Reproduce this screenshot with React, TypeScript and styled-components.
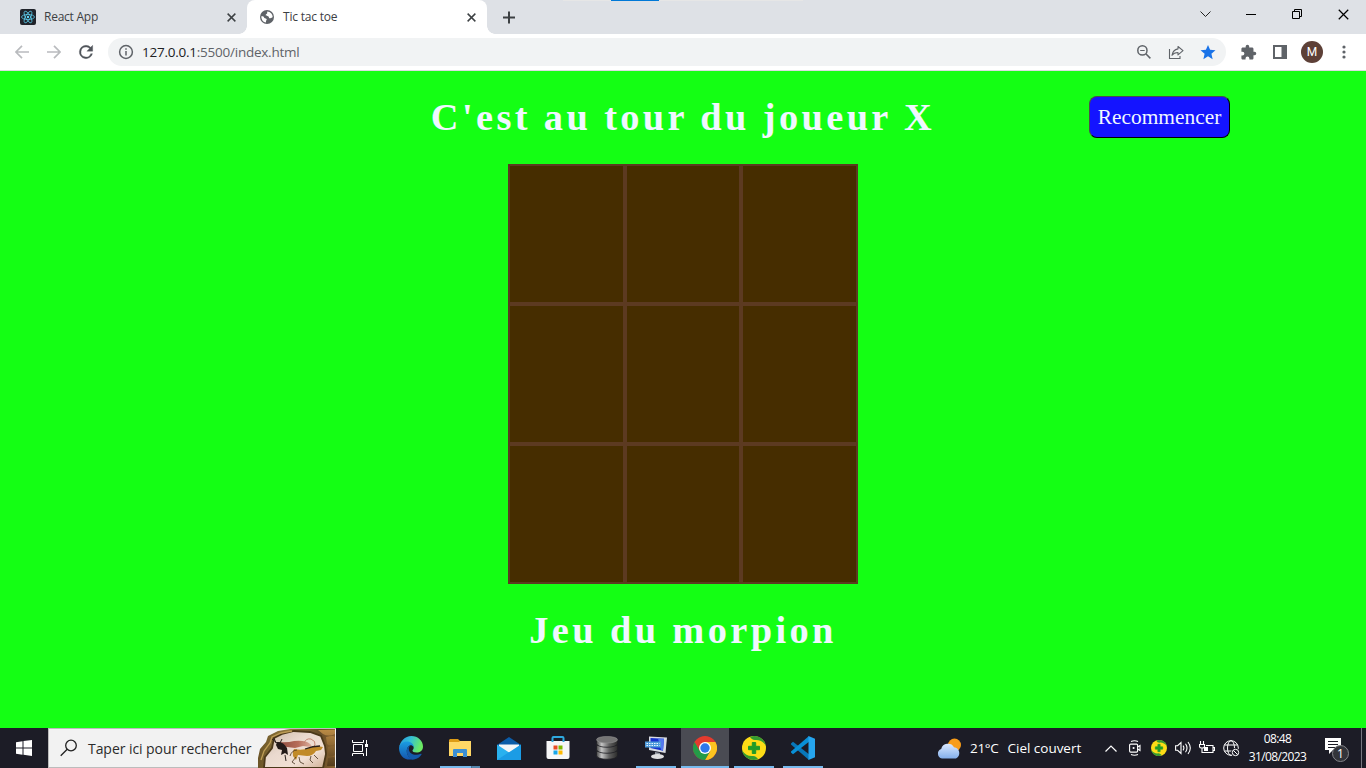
import React from 'react';
import styled, { createGlobalStyle, css } from 'styled-components';

const GlobalStyle = createGlobalStyle`
  * { box-sizing: border-box; }
  html, body { margin: 0; padding: 0; }
  body { width: 1366px; height: 768px; overflow: hidden; }
  svg { display: block; flex: none; }
`;

const uiFont = css`font-family: "Open Sans", "Noto Sans", sans-serif;`;

const Screen = styled.div`
  display: flex;
  flex-direction: column;
  width: 1366px;
  height: 768px;
  ${uiFont}
`;

/* ---------- browser chrome ---------- */

const TabStrip = styled.header`
  position: relative;
  display: flex;
  height: 34px;
  flex: none;
  background: #dee1e6;
`;

const TopHint = styled.div`
  position: absolute;
  top: 0;
  left: 563px;
  width: 240px;
  height: 1px;
  background: linear-gradient(90deg, #e6e6e6 48px, #0078d7 48px, #0078d7 96px, #e6e6e6 96px);
`;

const Tab = styled.div<{ $active?: boolean }>`
  position: relative;
  display: flex;
  align-items: center;
  width: ${p => (p.$active ? 240 : 247)}px;
  height: 34px;
  padding: 0 11px 0 ${p => (p.$active ? 12 : 20)}px;
  color: #3c4043;
  ${p => p.$active && css`
    background: #fff;
    border-radius: 8px 8px 0 0;
    &::before, &::after {
      content: '';
      position: absolute;
      bottom: 0;
      width: 8px;
      height: 8px;
    }
    &::before { left: -8px; background: radial-gradient(circle at 0 0, transparent 7.5px, #fff 8px); }
    &::after { right: -8px; background: radial-gradient(circle at 100% 0, transparent 7.5px, #fff 8px); }
  `}
`;

const TabTitle = styled.span<{ $spacing: number }>`
  flex: 1;
  margin-left: 8px;
  font-size: 12px;
  line-height: 16px;
  letter-spacing: ${p => p.$spacing}px;
  white-space: nowrap;
`;

const NewTab = styled.div`
  display: flex;
  align-items: center;
  margin-left: 16px;
`;

const WindowControls = styled.div`
  display: flex;
  margin-left: auto;
  height: 28px;
`;

const WindowButton = styled.div`
  display: flex;
  width: 46px;
  align-items: center;
  justify-content: center;
`;

const Toolbar = styled.div`
  display: flex;
  align-items: center;
  height: 37px;
  flex: none;
  padding: 0 6px;
  background: #fff;
  border-bottom: 1px solid #dadce0;
`;

const ToolSlot = styled.div`
  display: flex;
  width: 32px;
  height: 28px;
  align-items: center;
  justify-content: center;
`;

const AddressBar = styled.div`
  display: flex;
  align-items: center;
  width: 1118px;
  height: 28px;
  margin: 0 6px 0 6px;
  padding: 0 2px 0 10px;
  border-radius: 14px;
  background: #f1f3f4;
`;

const Url = styled.div`
  flex: 1;
  margin-left: 8px;
  font-size: 13.5px;
  line-height: 18px;
  letter-spacing: -0.24px;
  color: #5f6368;
  b { font-weight: 400; color: #202124; }
`;

const Avatar = styled.div`
  width: 22px;
  height: 22px;
  border-radius: 50%;
  background: #5d4037;
  color: #fff;
  font: 12px/22px Roboto, sans-serif;
  text-align: center;
`;

/* ---------- game page ---------- */

const Page = styled.main`
  display: grid;
  grid-template-columns: 1fr 560px 1fr;
  grid-template-rows: 93px 420px 1fr;
  justify-items: center;
  flex: 1;
  background: #14ff14;
  font-family: "Liberation Serif", serif;
`;

const Heading = styled.h1<{ $row: number }>`
  grid-column: 2;
  grid-row: ${p => p.$row};
  margin: 24px 0 0;
  font-size: 38.4px;
  line-height: 45px;
  font-weight: 700;
  letter-spacing: 3.38px;
  color: #f0f8ff;
  white-space: nowrap;
`;

const Restart = styled.button`
  grid-column: 3;
  grid-row: 1;
  justify-self: end;
  width: 141px;
  height: 42px;
  margin: 25px 136px 0 0;
  padding: 0;
  border: 1px solid;
  border-color: #4c4c4c #000 #000 #4c4c4c;
  border-radius: 8px;
  background: #1414ff;
  color: #f0f8ff;
  font: 21.4px/24px "Liberation Serif", serif;
`;

const Board = styled.div`
  grid-column: 2;
  grid-row: 2;
  display: grid;
  grid-template: repeat(3, 1fr) / repeat(3, 1fr);
  width: 350px;
  height: 420px;
`;

const Cell = styled.div`
  border: 2px solid #5c3a21;
  background: #462d00;
`;

/* ---------- taskbar ---------- */

const Taskbar = styled.footer`
  display: flex;
  height: 40px;
  flex: none;
  background: #1c1c26;
  color: #fff;
`;

const TaskSlot = styled.div<{ $active?: boolean; $gap?: number }>`
  position: relative;
  display: flex;
  width: 48px;
  height: 40px;
  margin-left: ${p => p.$gap ?? 0}px;
  align-items: center;
  justify-content: center;
  background: ${p => (p.$active ? '#4a4b53' : 'transparent')};
`;

const Running = styled.i<{ $wide?: boolean; $stack?: boolean }>`
  position: absolute;
  bottom: 0;
  left: ${p => (p.$wide ? 0 : 4)}px;
  width: ${p => (p.$wide ? 48 : 40)}px;
  height: 2px;
  background: ${p => (p.$stack ? 'linear-gradient(90deg, #76b9ed 31px, #3b5872 31px, #5486ad 32px)' : '#76b9ed')};
`;

const SearchBox = styled.div`
  display: flex;
  align-items: center;
  width: 288px;
  height: 40px;
  padding-left: 11px;
  background: #f2f2f2;
  border: 1px solid #bcbcbc;
  border-right: 0;
`;

const SearchText = styled.span`
  width: 170px;
  margin-left: 10px;
  padding-top: 1px;
  font-size: 14px;
  line-height: 20px;
  letter-spacing: -0.06px;
  color: #2b2b2b;
  white-space: nowrap;
`;

const Weather = styled.div`
  display: flex;
  align-items: center;
  margin-left: auto;
  width: 162px;
  font-size: 13.5px;
  white-space: nowrap;
`;

const Temperature = styled.span`
  margin-left: 8px;
  letter-spacing: -0.3px;
`;

const Conditions = styled.span`
  margin-left: 9px;
  letter-spacing: -0.02px;
`;

const Tray = styled.div`
  display: flex;
  align-items: center;
  width: 144px;
`;

const TraySlot = styled.div`
  display: flex;
  width: 24px;
  justify-content: center;
`;

const Clock = styled.div`
  display: flex;
  flex-direction: column;
  width: 73px;
  padding: 2px 4px 0 0;
  text-align: center;
  font-size: 12px;
  line-height: 18px;
  letter-spacing: -0.6px;
`;

const Notifications = styled.div`
  display: flex;
  width: 46px;
  padding: 4px 4px 0 0;
  align-items: center;
  justify-content: center;
  border-right: 1px solid #77777f;
  margin-right: 4px;
`;

/* ---------- icons ---------- */

const CloseIcon = ({ size = 9, width = 1.6, color = '#3c4043' }: { size?: number; width?: number; color?: string }) => (
  <svg width={size} height={size} viewBox="0 0 10 10" stroke={color} strokeWidth={width}>
    <path d="M.7.7l8.6 8.6M9.3.7L.7 9.3" />
  </svg>
);

const ReactIcon = () => (
  <svg width="16" height="16" viewBox="0 0 16 16" fill="none" stroke="#61dafb" strokeWidth=".7">
    <rect width="16" height="16" rx="2" fill="#20232a" stroke="none" />
    {[0, 60, 120].map(a => <ellipse key={a} cx="8" cy="8" rx="6.5" ry="2.5" transform={`rotate(${a} 8 8)`} />)}
    <circle cx="8" cy="8" r="1.2" fill="#61dafb" stroke="none" />
  </svg>
);

const GlobeIcon = () => (
  <svg width="16" height="16" viewBox="0 0 16 16">
    <circle cx="8" cy="8" r="7" fill="#5f6368" />
    <path d="M8.4 2.4C7.5 3.2 9 3.8 7.8 4.8S6.5 5.7 6.9 6.5s2.3.2 2.8 1.3.1 1.5 1.5 1.5 1.7-.6 2.5-1.2A5.8 5.8 0 0 0 8.4 2.4zM2.3 7.3A5.7 5.7 0 0 0 7 13.6V12.2c0-.7.7-.8.7-1.6S7 9.4 6 9.2 5.1 7.7 4.4 7.4s-1.4-.1-2.1-.1z" fill="#fff" />
  </svg>
);

const Arrow = ({ flip }: { flip?: boolean }) => (
  <svg width="14" height="14" viewBox="0 0 14 14" fill="none" stroke="#b9bbbe" strokeWidth="1.7" transform={flip ? 'scale(-1 1)' : undefined}>
    <path d="M14 7H1.4M7 .8L.9 7 7 13.2" />
  </svg>
);

const ReloadIcon = () => (
  <svg width="20" height="20" viewBox="0 0 24 24" fill="#50545a" stroke="#50545a" strokeWidth=".4">
    <path d="M17.65 6.35A7.95 7.95 0 0 0 12 4a8 8 0 1 0 7.73 10h-2.08A6 6 0 1 1 12 6c1.66 0 3.14.69 4.22 1.78L13 11h7V4z" />
  </svg>
);

const InfoIcon = () => (
  <svg width="16" height="16" viewBox="0 0 16 16" fill="none" stroke="#5f6368" strokeWidth="1.5">
    <circle cx="8" cy="8" r="6.4" /><path d="M8 7v4.5M8 4.2v1.6" />
  </svg>
);

const ZoomIcon = () => (
  <svg width="16" height="16" viewBox="0 0 16 16" fill="none" stroke="#5f6368" strokeWidth="1.5">
    <circle cx="6.4" cy="6.4" r="4.6" /><path d="M9.8 9.8l4.6 4.6" /><path d="M4.2 6.5h4.5" strokeWidth="1" />
  </svg>
);

const ShareIcon = () => (
  <svg width="16" height="16" viewBox="0 0 16 16" fill="none" stroke="#5f6368" strokeWidth="1.1">
    <path d="M1.5 5v9.5h10.5v-2.5" />
    <path d="M10 2.5l5 4.2-5 4.2V8.5c-2.7 0-4.6.7-6 2.8.5-3.4 2.4-5.8 6-6.4z" strokeLinejoin="round" />
  </svg>
);

const StarIcon = () => (
  <svg width="18" height="18" viewBox="0 0 24 24" fill="#1a73e8">
    <path d="M12 17.8L18.2 21.5l-1.64-7.03L22 9.74l-7.19-.61L12 2.5 9.19 9.13 2 9.74l5.46 4.73L5.82 21.5z" />
  </svg>
);

const PuzzleIcon = () => (
  <svg width="17" height="17" viewBox="0 0 24 24" fill="#5f6368">
    <path d="M20.5 11H19V7c0-1.1-.9-2-2-2h-4V3.5a2.5 2.5 0 0 0-5 0V5H4c-1.1 0-2 .9-2 2v3.8h1.5a2.7 2.7 0 0 1 0 5.4H2V20c0 1.1.9 2 2 2h3.8v-1.5a2.7 2.7 0 0 1 5.4 0V22H17c1.1 0 2-.9 2-2v-4h1.5a2.5 2.5 0 0 0 0-5z" />
  </svg>
);

const PanelIcon = () => (
  <svg width="14" height="14" viewBox="0 0 14 14">
    <path d="M0 0h14v14H0zM2 2v10h6.5V2z" fill="#5f6368" fillRule="evenodd" />
  </svg>
);

const DotsIcon = () => (
  <svg width="4" height="14" viewBox="0 0 4 14" fill="#5f6368">
    <circle cx="2" cy="2" r="1.6" /><circle cx="2" cy="7" r="1.6" /><circle cx="2" cy="12" r="1.6" />
  </svg>
);

const CavePainting = () => (
  <svg width="77" height="39" viewBox="0 0 77 39">
    <defs>
      <linearGradient id="rock" x1="0" y1="0" x2="1" y2="1">
        <stop offset="0" stopColor="#c9b7a2" /><stop offset=".4" stopColor="#ead9ce" /><stop offset=".7" stopColor="#f1e0d4" /><stop offset="1" stopColor="#cfae94" />
      </linearGradient>
      <linearGradient id="edge" x1="0" y1="0" x2="1" y2="0">
        <stop offset="0" stopColor="#6b5427" /><stop offset=".4" stopColor="#937a3d" /><stop offset=".8" stopColor="#654d28" /><stop offset="1" stopColor="#8a6330" />
      </linearGradient>
      <linearGradient id="sand" x1="0" y1="0" x2="0" y2="1">
        <stop offset="0" stopColor="#b98a45" /><stop offset="1" stopColor="#543c1c" />
      </linearGradient>
      <linearGradient id="ochre" x1="0" y1="0" x2="1" y2="0">
        <stop offset="0" stopColor="#7d3325" /><stop offset=".6" stopColor="#ad5a44" /><stop offset="1" stopColor="#d8a795" />
      </linearGradient>
    </defs>
    <path d="M0 39V29L2 20 8 13 10 7 20 2 32 0H77v39z" fill="url(#edge)" />
    <path d="M60 1h17v4q-7 3-12 0zM68 8q8-2 9 0v7q-5 3-8 0zM70 18q7-2 7 0v8q-5 3-7 0zM70 29q7-2 7 0v8h-8z" fill="url(#sand)" />
    <path d="M6 39l1-11 7-9 2-10 8-4 12-3 16 1 11 4 4 10 1 8-3 14z" fill="url(#rock)" stroke="#4b3819" strokeWidth="1.8" />
    <path d="M3 31l3-9 6-8 2-6 9-4 11-2" fill="none" stroke="#bd9c55" strokeWidth="1.3" />
    <path d="M21 13q8 1 15-1 7-1 13 1 6 3 4 5l-8-1-8 2-8-1-9-1z" fill="url(#ochre)" opacity=".85" />
    <path d="M46 14q2-5 7-4 5 2 4 6l-3 3" fill="none" stroke="#c17f69" strokeWidth=".9" />
    <path d="M19 13q6-1 10 6l1 7-3-2-4 2 1-5-4-1-2-4z" fill="#221a18" />
    <path d="M19 14l-5-4M18 14l-2-5M22 14l2-4M27 26l1 6" fill="none" stroke="#2b211d" strokeWidth="1" />
    <path d="M36 20q8 2 15-1l8-2 6 1-2 3-5 1q-3 5-9 5l-9-1-2 5-3-4q-1-4 1-7z" fill="#c18a28" />
    <path d="M47 20q8-3 15-3" fill="none" stroke="#2c211a" strokeWidth="1.3" />
    <path d="M39 21q-5 0-7 6M38 28l-4 5 3 2M41 28l1 5 4 2M53 27l-1 4 3 3M56 26l4 4" fill="none" stroke="#46321f" strokeWidth=".8" />
  </svg>
);

const EdgeIcon = () => (
  <svg width="24" height="24" viewBox="0 0 24 24">
    <defs>
      <linearGradient id="edgeTop" x1="0" y1="0" x2="1" y2=".3"><stop stopColor="#2697df" /><stop offset=".5" stopColor="#35bfd5" /><stop offset="1" stopColor="#6bea63" /></linearGradient>
      <linearGradient id="edgeLow" x1="0" y1="0" x2="0" y2="1"><stop stopColor="#1b9de2" /><stop offset="1" stopColor="#1555ad" /></linearGradient>
    </defs>
    <path d="M0 12C1 5 6 0 12.4 0 19 0 24 5 24 10.5c0 4-3 6-6.5 6-3 0-4-1-4-2 0-.8 1.2-1 1.2-3C14.7 9 11 6.8 7.8 6.8 3.5 6.8 1 9 0 12z" fill="url(#edgeTop)" />
    <path d="M0 12c.5-4 4-6.5 8-6.5 4.5 0 7 3 6.7 6-.4-1.7-2-2.3-3.3-2.3-2 .3-3.6 3-3.6 6 0 4.5 3.2 7.7 8 7.5C6.5 26 0 20 0 12z" fill="url(#edgeLow)" />
    <path d="M11.4 9.2c-2 .3-3.6 3-3.6 6 0 4.5 3.2 8.5 7.2 8.3 3.5-.5 6-2.5 7.5-5 .3-.7-.1-1-.7-.7-5 2.4-12 .6-12-5 0-1.6.8-2.9 1.6-3.6z" fill="#135aaa" />
  </svg>
);

const FolderIcon = () => (
  <svg width="22" height="18" viewBox="0 0 22 18">
    <path d="M1 0h8l2 2h11v4H0V1z" fill="#dd9c16" /><path d="M0 3h10l1-1h11v15H0z" fill="#ffd766" />
    <path d="M4 18v-7q0-1 1-1h12q1 0 1 1v7h-4v-4H8v4z" fill="#3c8fd3" />
  </svg>
);

const MailIcon = () => (
  <svg width="24" height="23" viewBox="0 0 24 23">
    <path d="M0 8L12 0l12 8v5H0z" fill="#0b5ca8" /><path d="M2 7.5h20v3L12 16 2 10.5z" fill="#f4f6f8" />
    <path d="M0 7.5l12 8 12-8V23H0z" fill="#29b1ef" /><path d="M0 23L24 7.5V23z" fill="#1490df" opacity=".65" />
  </svg>
);

const StoreIcon = () => (
  <svg width="24" height="24" viewBox="0 0 24 24">
    <path d="M.5 5h23v16q0 2-2 2h-19q-2 0-2-2z" fill="#f6f6f7" />
    <path d="M6.5 6V2q0-1 1-1h9q1 0 1 1v4" fill="none" stroke="#2ea9df" strokeWidth="2" />
    <path d="M7.5 9.5h4v4h-4z" fill="#e94c25" /><path d="M12.5 9.5h4v4h-4z" fill="#7fba00" />
    <path d="M7.5 14.5h4v4h-4z" fill="#16a5e9" /><path d="M12.5 14.5h4v4h-4z" fill="#ffb900" />
  </svg>
);

const DatabaseIcon = () => (
  <svg width="22" height="24" viewBox="0 0 22 24">
    <defs><linearGradient id="metal"><stop stopColor="#444" /><stop offset=".25" stopColor="#c5c5c5" /><stop offset=".6" stopColor="#606060" /><stop offset="1" stopColor="#2b2b2b" /></linearGradient></defs>
    {[15.5, 9.5, 3.5].map(y => <path key={y} d={`M.5 ${y}v4c0 5 21 5 21 0v-4z`} fill="url(#metal)" stroke="#1f1f25" strokeWidth=".8" />)}
    <ellipse cx="11" cy="3.7" rx="10.5" ry="3.3" fill="#757575" stroke="#929292" strokeWidth=".6" />
  </svg>
);

const ComputerIcon = () => (
  <svg width="24" height="24" viewBox="0 0 24 24">
    <path d="M5 .5l18 1-1.5 15.5L5 14z" fill="#d9dce3" /><path d="M6.5 2l13.5.8-1 12L6.5 12z" fill="#1530ce" />
    <path d="M14 2.5l6 .3-1 12-2-1z" fill="#5278ee" /><path d="M11 16l5 1v3h-5z" fill="#949aa3" />
    <ellipse cx="13.5" cy="20.5" rx="6.5" ry="2.6" fill="#dedfe1" />
    <path d="M1 5.5h16v6H1z" fill="#4f9bdb" /><path d="M2.5 7.5h13M2.5 9.5h13" stroke="#e7f4ff" strokeDasharray="1.5 1" />
  </svg>
);

const ChromeIcon = () => (
  <svg width="24" height="24" viewBox="0 0 24 24">
    <circle cx="12" cy="12" r="12" fill="#e33b2e" />
    <path d="M12 6h10.4A12 12 0 0 1 12 24l5.2-9z" fill="#fdc41f" />
    <path d="M1.600 6A12 12 0 0 0 12 24l5.200-9H6.800z" fill="#249b48" />
    <circle cx="12" cy="12" r="6" fill="#fff" /><circle cx="12" cy="12" r="4.7" fill="#2f78eb" />
  </svg>
);

const PlusBadge = ({ size = 24 }: { size?: number }) => (
  <svg width={size} height={size} viewBox="0 0 24 24">
    <circle cx="12" cy="12" r="12" fill="#fddc16" />
    <path d="M8 1C15-2 23 3 23.8 9.5 21 5 17 3.5 13 4 10.5 4 9 2.5 8 1zM16 23C9 26 1 21 .2 14.5 3 19 7 20.5 11 20c2.5 0 4 1.5 5 3z" fill="#359b30" />
    <path d="M10.3 6.5h3.4v3.8h3.8v3.4h-3.8v3.8h-3.4v-3.8H6.5v-3.4h3.8z" fill="#219b28" stroke="#219b28" strokeWidth="1" strokeLinejoin="round" />
  </svg>
);

const CodeIcon = () => (
  <svg width="24" height="24" viewBox="0 0 24 24">
    <path d="M0 7.5l2-1.7 16 12.5V24L0 8.5z" fill="#0877b9" />
    <path d="M0 16.5l2 1.7L18 5.7V0L0 15.5z" fill="#0990d6" />
    <path d="M17.5 0L24 2.7v18.6L17.5 24z" fill="#26a5ee" />
  </svg>
);

const WeatherIcon = () => (
  <svg width="25" height="21" viewBox="0 0 25 21">
    <defs><linearGradient id="cloud" x1="0" y1="0" x2="0" y2="1"><stop stopColor="#dceaff" /><stop offset="1" stopColor="#83aeea" /></linearGradient></defs>
    <circle cx="17.5" cy="7" r="6.5" fill="#f89c18" />
    <path d="M5 20.5a5 5 0 0 1-.8-9.6A7 7 0 0 1 17 9.2 6 6 0 0 1 19 20.5z" fill="url(#cloud)" />
  </svg>
);

const NotificationIcon = () => (
  <svg width="26" height="26" viewBox="0 0 26 26">
    <path d="M1 1h16v12H9l-4 4v-4H1z" fill="#fff" /><path d="M4 4.5h10M4 7.5h10M4 10.5h7" stroke="#1c1c26" />
    <circle cx="16.5" cy="16.5" r="8" fill="#33343a" stroke="#85858a" />
    <text x="16.5" y="21" textAnchor="middle" fill="#fff" fontFamily="Open Sans" fontSize="12">1</text>
  </svg>
);

export default function App() {
  return (
    <Screen>
      <GlobalStyle />
      <TabStrip>
        <TopHint />
        <Tab><ReactIcon /><TabTitle $spacing={-0.25}>React App</TabTitle><CloseIcon /></Tab>
        <Tab $active><GlobeIcon /><TabTitle $spacing={-0.2}>Tic tac toe</TabTitle><CloseIcon /></Tab>
        <NewTab>
          <svg width="13" height="13" viewBox="0 0 13 13" stroke="#3c4043" strokeWidth="2"><path d="M6 .5v12M0 6.5h12" /></svg>
        </NewTab>
        <WindowControls>
          <WindowButton><svg width="11" height="7" viewBox="0 0 11 7" fill="none" stroke="#222"><path d="M.5.5l5 5 5-5" /></svg></WindowButton>
          <WindowButton><svg width="10" height="10" viewBox="0 0 10 10" stroke="#000"><path d="M0 5.5h10" /></svg></WindowButton>
          <WindowButton><svg width="10" height="10" viewBox="0 0 10 10" fill="none" stroke="#000"><path d="M.5 2.5h7v7h-7zM2.5 2.5v-2h7v7h-2" /></svg></WindowButton>
          <WindowButton><CloseIcon size={11} width={1.1} color="#000" /></WindowButton>
        </WindowControls>
      </TabStrip>
      <Toolbar>
        <ToolSlot><Arrow /></ToolSlot>
        <ToolSlot><Arrow flip /></ToolSlot>
        <ToolSlot><ReloadIcon /></ToolSlot>
        <AddressBar>
          <InfoIcon />
          <Url><b>127.0.0.1</b>:5500/index.html</Url>
          <ToolSlot><ZoomIcon /></ToolSlot>
          <ToolSlot><ShareIcon /></ToolSlot>
          <ToolSlot><StarIcon /></ToolSlot>
        </AddressBar>
        <ToolSlot><PuzzleIcon /></ToolSlot>
        <ToolSlot><PanelIcon /></ToolSlot>
        <ToolSlot><Avatar>M</Avatar></ToolSlot>
        <ToolSlot><DotsIcon /></ToolSlot>
      </Toolbar>
      <Page>
        <Heading $row={1}>C'est au tour du joueur X</Heading>
        <Restart>Recommencer</Restart>
        <Board>{Array.from({ length: 9 }, (_, i) => <Cell key={i} />)}</Board>
        <Heading $row={3}>Jeu du morpion</Heading>
      </Page>
      <Taskbar>
        <TaskSlot>
          <svg width="16" height="16" viewBox="0 0 16 16" fill="#fff"><path d="M0 2.2L6.5 1.3v6.2H0zM7.5 1.1L16 0v7.5H7.5zM0 8.5h6.5v6.2L0 13.8zM7.5 8.5H16V16l-8.5-1.2z" /></svg>
        </TaskSlot>
        <SearchBox>
          <svg width="18" height="18" viewBox="0 0 18 18" fill="none" stroke="#222" strokeWidth="1.3"><circle cx="11" cy="6.5" r="5.3" /><path d="M7.2 10.3L.7 16.8" /></svg>
          <SearchText>Taper ici pour rechercher</SearchText>
          <CavePainting />
        </SearchBox>
        <TaskSlot>
          <svg width="17" height="16" viewBox="0 0 17 16" fill="none" stroke="#fff"><path d="M.5 0v2.5h11V0M.5 16v-2.5h11V16M1.5 4.5h9v7h-9zM14.5 0v4M14.5 8v8" /><path d="M13 4h3v3h-3z" fill="#fff" stroke="none" /></svg>
        </TaskSlot>
        <TaskSlot $gap={3}><EdgeIcon /></TaskSlot>
        <TaskSlot $gap={1}><FolderIcon /><Running $stack /></TaskSlot>
        <TaskSlot $gap={1}><MailIcon /></TaskSlot>
        <TaskSlot $gap={1}><StoreIcon /></TaskSlot>
        <TaskSlot $gap={1}><DatabaseIcon /></TaskSlot>
        <TaskSlot $gap={1}><ComputerIcon /><Running /></TaskSlot>
        <TaskSlot $gap={1} $active><ChromeIcon /><Running $wide /></TaskSlot>
        <TaskSlot $gap={1}><PlusBadge /><Running /></TaskSlot>
        <TaskSlot $gap={1}><CodeIcon /><Running /></TaskSlot>
        <Weather><WeatherIcon /><Temperature>21°C</Temperature><Conditions>Ciel couvert</Conditions></Weather>
        <Tray>
          <TraySlot><svg width="12" height="7" viewBox="0 0 12 7" fill="none" stroke="#fff" strokeWidth="1.2"><path d="M.5 6.5L6 1l5.5 5.5" /></svg></TraySlot>
          <TraySlot><svg width="12" height="16" viewBox="0 0 12 16" fill="none" stroke="#fff" strokeWidth="1.1"><path d="M2 1.5q3.5-1.5 7 0M2 14.5q3.5 1.5 7 0" /><rect x=".6" y="4.1" width="8" height="8" rx="1" /><path d="M8.6 7l2.4-1.5v5L8.6 9" /><circle cx="4.6" cy="8" r=".5" /></svg></TraySlot>
          <TraySlot><PlusBadge size={16} /></TraySlot>
          <TraySlot><svg width="17" height="14" viewBox="0 0 17 14" fill="none" stroke="#fff" strokeWidth="1.1"><path d="M.6 4.7h2L6 1.5v11L2.6 9.3h-2zM8 4.7q1.8 2.3 0 4.6M10.5 2.8q3 4.2 0 8.4M13 1q4.6 6 0 12" /></svg></TraySlot>
          <TraySlot><svg width="16" height="14" viewBox="0 0 16 14" fill="none" stroke="#fff" strokeWidth="1.1"><path d="M1.5 0v3M4.5 0v3M.5 3.5h5v2q0 1.5-2.5 1.5T.5 5.5zM3 7v4.5h11v-7H7M14.5 6.5h1v3h-1" /><path d="M5 6h4v4H5z" fill="#fff" stroke="none" /></svg></TraySlot>
          <TraySlot><svg width="17" height="17" viewBox="0 0 17 17" fill="none" stroke="#fff" strokeWidth="1"><circle cx="8" cy="8" r="7.3" /><ellipse cx="8" cy="8" rx="3.5" ry="7.3" /><path d="M1.5 5h13M1.5 11h13" /><circle cx="12.5" cy="12.5" r="4.5" fill="#1c1c26" stroke="none" /><circle cx="12.5" cy="12.5" r="3.2" /><path d="M10.3 10.3l4.4 4.4" /></svg></TraySlot>
        </Tray>
        <Clock><span>08:48</span><span>31/08/2023</span></Clock>
        <Notifications><NotificationIcon /></Notifications>
      </Taskbar>
    </Screen>
  );
}
